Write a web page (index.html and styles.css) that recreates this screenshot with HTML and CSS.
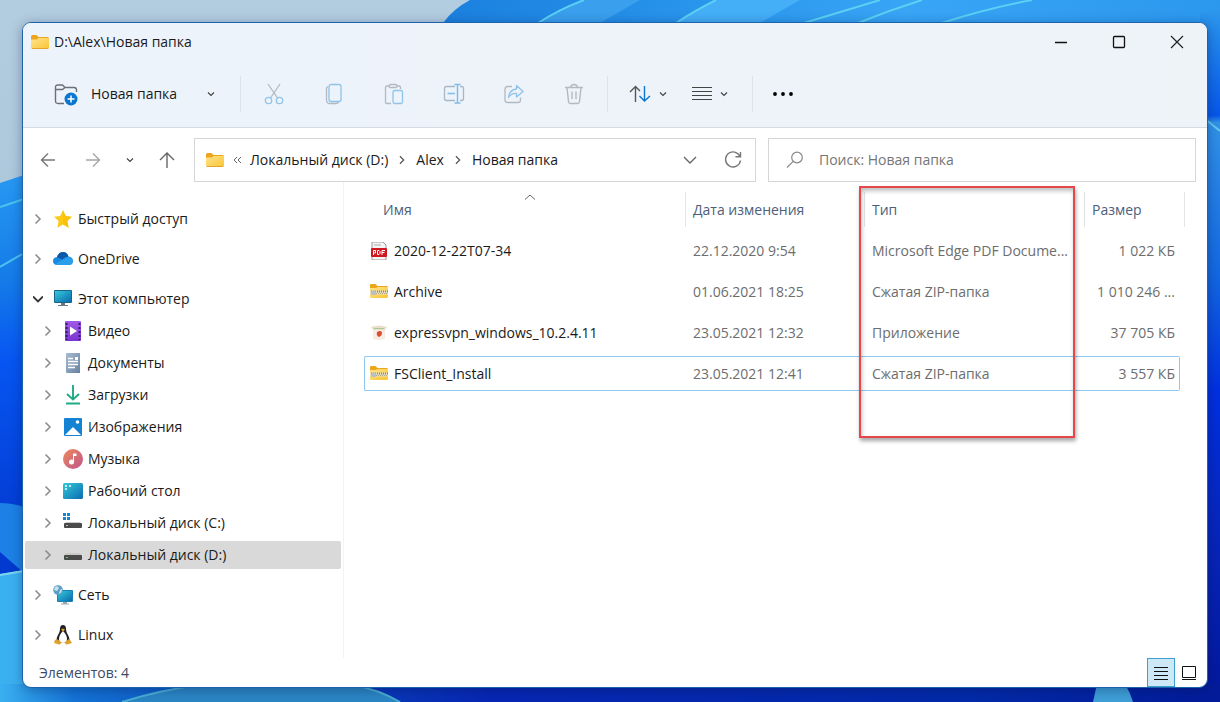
FILE: index.html
```html
<!DOCTYPE html>
<html lang="ru">
<head>
<meta charset="utf-8">
<title>D:\Alex\Новая папка</title>
<link rel="stylesheet" href="styles.css">
</head>
<body>
<svg width="0" height="0" class="defs" aria-hidden="true">
  <defs>
    <linearGradient id="gFolder" x1="0" y1="0" x2="1" y2="1"><stop offset="0" stop-color="#ffe38f"/><stop offset="1" stop-color="#f9c531"/></linearGradient>
    <linearGradient id="gTeal" x1="0" y1="0" x2="1" y2="1"><stop offset="0" stop-color="#35c9d9"/><stop offset="1" stop-color="#0a6bb0"/></linearGradient>
    <linearGradient id="gVideo" x1="0" y1="0" x2="0" y2="1"><stop offset="0" stop-color="#a05ae8"/><stop offset="1" stop-color="#7a35cf"/></linearGradient>
    <linearGradient id="gDoc" x1="0" y1="0" x2="1" y2="1"><stop offset="0" stop-color="#a9bdd2"/><stop offset="1" stop-color="#67819f"/></linearGradient>
    <linearGradient id="gMusic" x1="0" y1="0" x2="1" y2="1"><stop offset="0" stop-color="#ee8a5a"/><stop offset="1" stop-color="#bf548c"/></linearGradient>
    <symbol id="folder" viewBox="0 0 18 14"><path d="M0 2Q0 0 1.500 0H5.500L7.500 2H16.500Q18 2 18 3.500V12H0Z" fill="#eda51c"/><path d="M0 4.500H6L7.500 3H17Q18 3 18 4V12.500Q18 14 16.500 14H1.500Q0 14 0 12.500Z" fill="url(#gFolder)"/><path d="M1 13.500H17" stroke="#e0a52c"/></symbol>
    <symbol id="zip" viewBox="0 0 18 14"><path d="M0 1Q0 0 1 0H5.500L7.500 2H17L18 3V12H0Z" fill="#eda51c"/><path d="M0 4H6L7.500 3H18V13L17 14H1L0 13Z" fill="url(#gFolder)"/><rect y="6.500" width="18" height="4" fill="#e9dfb8"/><path d="M1 7.500H18" stroke="#8d8870" stroke-width="2" stroke-dasharray="1 1"/><path d="M2 9.500H18" stroke="#aaa58c" stroke-width="1" stroke-dasharray="1 1"/><rect x="1" y="7" width="5" height="4" rx="1" fill="#b7c0c7"/></symbol>
    <symbol id="down" viewBox="0 0 8 8"><path d="M1 2.500L4 5.500L7 2.500" fill="none" stroke="currentColor" stroke-width="1.200"/></symbol>
    <symbol id="right" viewBox="0 0 8 12"><path d="M1.500 1.500L6 6L1.500 10.500" fill="none" stroke="currentColor" stroke-width="1.500"/></symbol>
    <symbol id="drive" viewBox="0 0 20 18"><path d="M3 7H17L19 10H1Z" fill="#c9c9c9"/><rect x="1" y="9" width="18" height="5" rx="1" fill="#4a4a4a"/><rect x="3" y="11" width="2" height="1" fill="#56d06c"/></symbol>
  </defs>
</svg>

<svg class="wallpaper" viewBox="0 0 1220 702" preserveAspectRatio="none" aria-hidden="true">
  <defs>
    <linearGradient id="sky" x1="0" y1="0" x2="0" y2="1"><stop offset="0" stop-color="#b3cde0"/><stop offset="1" stop-color="#9db9cf"/></linearGradient>
    <linearGradient id="top" x1="0" y1="0" x2="1" y2="0"><stop offset="0" stop-color="#1b80de"/><stop offset=".3" stop-color="#2793ea"/><stop offset=".6" stop-color="#38a5f5"/><stop offset="1" stop-color="#2b98ee"/></linearGradient>
    <linearGradient id="left" x1="0" y1="0" x2="0" y2="1"><stop offset="0" stop-color="#2798f2"/><stop offset=".2" stop-color="#147be8"/><stop offset=".35" stop-color="#0756f2"/><stop offset=".7" stop-color="#0238cf"/><stop offset="1" stop-color="#0541ca"/></linearGradient>
    <linearGradient id="side" x1="0" y1="0" x2="0" y2="1"><stop offset="0" stop-color="#2b96ec"/><stop offset=".15" stop-color="#0757ea"/><stop offset=".16" stop-color="#3292e6"/><stop offset=".38" stop-color="#1468e1"/><stop offset=".55" stop-color="#0030e0"/><stop offset=".75" stop-color="#0726bb"/><stop offset="1" stop-color="#03189b"/></linearGradient>
    <linearGradient id="bottom" x1="0" y1="0" x2="1" y2="0"><stop offset="0" stop-color="#3bb0f0"/><stop offset=".06" stop-color="#1474d6"/><stop offset=".18" stop-color="#0c50bd"/><stop offset=".4" stop-color="#0727b4"/><stop offset=".8" stop-color="#032aa9"/><stop offset="1" stop-color="#031b99"/></linearGradient>
  </defs>
  <rect width="1220" height="702" fill="url(#sky)"/>
  <path d="M443 23Q453 9 470 0H1220V60H443Z" fill="url(#top)"/>
  <path d="M538 23L584 0H640L600 23Z" fill="#3a9fec"/>
  <path d="M676 23L716 0H800L760 23Z" fill="#44aef6"/>
  <path d="M538 23Q560 9 584 0M676 23Q694 11 716 0M804 23Q850 9 880 0M858 23Q890 10 922 0M942 23Q985 9 1032 0" fill="none" stroke="#5bd0f2" stroke-width="2"/>
  <path d="M0 183L24 175V702H0Z" fill="url(#left)"/>
  <path d="M0 207L24 199M0 267L24 253" stroke="#4cc3ee" stroke-width="2"/>
  <path d="M0 503Q12 503 24 507V573L0 552Z" fill="#1c80e6"/>
  <path d="M0 574L24 570V702H0Z" fill="#3bb0f0"/>
  <path d="M0 575L24 571" stroke="#7fd5ef" stroke-width="2"/>
  <rect x="1200" y="12" width="20" height="690" fill="url(#side)"/>
  <path d="M1200 115L1220 131" stroke="#63c9ee" stroke-width="2"/>
  <rect y="684" width="1220" height="18" fill="url(#bottom)"/>
  <path d="M122 702Q160 690 205 684H350Q380 690 400 702Z" fill="#2b86c4"/>
  <path d="M122 702Q160 690 205 684M350 684Q380 690 400 702" stroke="#4aafd4" stroke-width="2" fill="none"/>
  <path d="M1093 702L1097 684H1125Q1130 692 1133 702Z" fill="#3e9fd6"/>
</svg>

<main class="window">
  <header class="chrome">
    <div class="titlebar">
      <svg class="folder-icon"><use href="#folder"/></svg>
      <h1 class="title">D:\Alex\Новая папка</h1>
      <div class="window-buttons">
        <button type="button" aria-label="Свернуть"><svg width="14" height="14"><path d="M1 7.500H13" stroke="#111" stroke-width="1.300"/></svg></button>
        <button type="button" aria-label="Развернуть"><svg width="14" height="14"><rect x="1.500" y="1.500" width="11" height="11" rx="1" fill="none" stroke="#111" stroke-width="1.300"/></svg></button>
        <button type="button" aria-label="Закрыть"><svg width="14" height="14"><path d="M1 1L13 13M13 1L1 13" stroke="#222" stroke-width="1.200"/></svg></button>
      </div>
    </div>
    <div class="commands">
      <button type="button" class="new-folder">
        <svg width="24" height="24" fill="none"><path d="M10 21.500H4Q1.500 21.500 1.500 19V5.500Q1.500 3 4 3H8.500L11 5.500H20Q22.500 5.500 22.500 8V10M1.500 7.500H8.500L11 5.500" stroke="#6c7076" stroke-width="1.400"/><circle cx="17" cy="17" r="6.500" fill="#0b76d0"/><path d="M17 13.500V20.500M13.500 17H20.500" stroke="#fff" stroke-width="1.500"/></svg>
        <span>Новая папка</span>
        <svg class="down"><use href="#down"/></svg>
      </button>
      <span class="divider"></span>
      <div class="tools">
        <button type="button" aria-label="Вырезать"><svg width="22" height="22" fill="none" stroke-width="1.300"><path d="M5 1L14.500 15M17 1L7.500 15" stroke="#b3b9c1"/><circle cx="5.500" cy="17.500" r="3.200" stroke="#8fc3ea"/><circle cx="16.500" cy="17.500" r="3.200" stroke="#8fc3ea"/></svg></button>
        <button type="button" aria-label="Копировать"><svg width="22" height="22" fill="none" stroke-width="1.300"><path d="M5 3.500Q3.500 4 3.500 6V17Q3.500 20.500 7 20.500H13Q15 20.500 15.500 19" stroke="#b3b9c1"/><rect x="6" y="1.500" width="12" height="17" rx="2" stroke="#8fc3ea"/></svg></button>
        <button type="button" aria-label="Вставить"><svg width="22" height="22" fill="none" stroke-width="1.300"><path d="M8 20.500H4Q2.500 20.500 2.500 19V4.500Q2.500 3 4 3H6M14 3H16Q17.500 3 17.500 4.500V6" stroke="#b3b9c1"/><rect x="6" y="1.500" width="8" height="3" rx="1.500" stroke="#b3b9c1"/><rect x="10" y="7.500" width="9.500" height="13" rx="1.500" stroke="#8fc3ea"/></svg></button>
        <button type="button" aria-label="Переименовать"><svg width="22" height="22" fill="none" stroke-width="1.300"><path d="M12 3.500H3.500Q1.500 3.500 1.500 5.500V15.500Q1.500 17.500 3.500 17.500H12M17 3.500H18.500Q20.500 3.500 20.500 5.500V15.500Q20.500 17.500 18.500 17.500H17" stroke="#a8b7c8"/><path d="M4.500 10.500H12M14.500 1.500V20M11.500 1.500H17.500M11.500 20H17.500" stroke="#7fbce8" stroke-width="1.500"/></svg></button>
        <button type="button" aria-label="Поделиться"><svg width="22" height="22" fill="none" stroke-width="1.300" stroke-linejoin="round"><path d="M9 3.500H4.500Q2 3.500 2 6V17Q2 19.500 4.500 19.500H15Q17.500 19.500 17.500 17V14.500" stroke="#b3b9c1"/><path d="M13.500 2.500L20 8.500L13.500 14V10.500Q8.500 10 5.500 14.500Q6 7 13.500 6Z" stroke="#8fc3ea"/></svg></button>
        <button type="button" aria-label="Удалить"><svg width="22" height="22" fill="none" stroke="#b3b9c1" stroke-width="1.400"><path d="M2 4.500H20M7.500 4.500Q8 1.500 11 1.500Q14 1.500 14.500 4.500M4 4.500L5.500 18.500Q5.700 20.500 7.500 20.500H14.500Q16.300 20.500 16.500 18.500L18 4.500M9 8.500V16M13 8.500V16"/></svg></button>
      </div>
      <span class="divider"></span>
      <div class="menus">
        <button type="button" aria-label="Сортировать"><svg width="22" height="18" fill="none" stroke-width="1.400"><path d="M6.500 17V2M1 7L6.500 1.500L11 6" stroke="#555"/><path d="M15.500 1V16M10.500 11L15.500 16L21 11" stroke="#0b76d0"/></svg><svg class="down"><use href="#down"/></svg></button>
        <button type="button" aria-label="Просмотреть"><svg width="20" height="16"><path d="M0 1.500H20M0 5.500H20M0 9.500H20M0 13.500H20" stroke="#444" stroke-width="1.200"/></svg><svg class="down"><use href="#down"/></svg></button>
      </div>
      <span class="divider"></span>
      <button type="button" class="more" aria-label="Дополнительно"><svg width="20" height="4"><circle cx="2" cy="2" r="1.900"/><circle cx="10" cy="2" r="1.900"/><circle cx="18" cy="2" r="1.900"/></svg></button>
    </div>
  </header>

  <div class="navigation">
    <nav class="history" aria-label="Переходы">
      <button type="button" aria-label="Назад"><svg width="16" height="16" fill="none" stroke="#777" stroke-width="1.400"><path d="M15 8H1.500M8 1.500L1.500 8L8 14.500"/></svg></button>
      <button type="button" aria-label="Вперёд"><svg width="16" height="16" fill="none" stroke="#a5a5a5" stroke-width="1.400"><path d="M1 8H14.500M8 1.500L14.500 8L8 14.500"/></svg></button>
      <button type="button" aria-label="Последние" class="recent"><svg class="down"><use href="#down"/></svg></button>
      <button type="button" aria-label="Вверх"><svg width="16" height="16" fill="none" stroke="#666" stroke-width="1.400"><path d="M8 16V1M1 8L8 1L15 8"/></svg></button>
    </nav>
    <div class="address">
      <svg class="folder-icon"><use href="#folder"/></svg>
      <svg class="chevrons" width="8" height="8"><path d="M4 1L1 4L4 7M8 1L5 4L8 7" fill="none" stroke="#666"/></svg>
      <a href="#">Локальный диск (D:)</a>
      <svg class="crumb"><use href="#right"/></svg>
      <a href="#">Alex</a>
      <svg class="crumb"><use href="#right"/></svg>
      <a href="#">Новая папка</a>
      <button type="button" class="expand" aria-label="Показать список"><svg width="14" height="10"><path d="M1 2L7 8L13 2" fill="none" stroke="#666" stroke-width="1.400"/></svg></button>
      <button type="button" aria-label="Обновить"><svg width="18" height="18" fill="none" stroke="#777" stroke-width="1.400"><path d="M16 5.500A7.500 7.500 0 1 0 16.500 9.500M16.500 1V5.800H11.500"/></svg></button>
    </div>
    <label class="search">
      <svg width="18" height="18" fill="none" stroke="#888" stroke-width="1.200"><circle cx="11" cy="6.500" r="5.300"/><path d="M7.200 10.300L1 16.500"/></svg>
      <input type="search" aria-label="Поиск" placeholder="Поиск: Новая папка">
    </label>
  </div>

  <div class="content">
    <aside class="tree">
      <ul>
        <li><button type="button"><svg class="toggle"><use href="#right"/></svg><svg class="ico" viewBox="0 0 20 20"><path d="M10 1L12.800 7L19 7.700L14.400 12L15.700 18.700L10 15.400L4.300 18.700L5.600 12L1 7.700L7.200 7Z" fill="#fcc916"/><path d="M10 1L12.800 7L19 7.700L14.400 12L15.700 18.700L10 15.400Z" fill="#f8b900" opacity=".4"/></svg>Быстрый доступ</button></li>
      </ul>
      <ul>
        <li><button type="button"><svg class="toggle"><use href="#right"/></svg><svg class="ico" viewBox="0 0 20 20"><path d="M4.500 16Q0 16 0 12Q0 8.500 4 8Q6 3 10 3Q14 3 15.500 7.500Q20 8 20 12Q20 16 16 16Z" fill="#168be0"/><path d="M4 8Q6 3 10 3Q14 3 15.500 7.500Q12 7.500 9 10.500L4 8Z" fill="#0958aa"/><path d="M2 15L13 9Q17 6.500 19.500 10Q20.500 16 16 16H4.500Q3 16 2 15Z" fill="#32a6ed" opacity=".7"/></svg>OneDrive</button></li>
      </ul>
      <ul>
        <li><button type="button"><svg class="toggle" viewBox="0 0 10 12"><path d="M0 3.500L5 8.500L10 3.500" fill="none" stroke="#333" stroke-width="1.800"/></svg><svg class="ico" viewBox="0 0 20 20"><rect x="1" y="1" width="18" height="13" rx="1" fill="#176488"/><rect x="2" y="2" width="16" height="11" fill="url(#gTeal)"/><path d="M8 14H12V16H15V17H5V16H8Z" fill="#6b7780"/></svg>Этот компьютер</button>
          <ul class="branch">
            <li><button type="button"><svg class="toggle"><use href="#right"/></svg><svg class="ico" viewBox="0 0 20 20"><rect x="2" width="16" height="20" rx="1" fill="url(#gVideo)"/><path d="M3.500 2V19M16.500 2V19" stroke="#39166d" stroke-width="2" stroke-dasharray="2 2"/><path d="M7 5.500L14 10L7 14.500Z" fill="#fff"/></svg>Видео</button></li>
            <li><button type="button"><svg class="toggle"><use href="#right"/></svg><svg class="ico" viewBox="0 0 20 20"><path d="M3 0H17V20H4Q3 20 3 19Z" fill="url(#gDoc)"/><path d="M5 5.500H10M5 8.500H15M5 11.500H15M5 14.500H12" stroke="#fff" stroke-width="1.300"/><rect x="12" y="4" width="3" height="3" fill="#fff"/></svg>Документы</button></li>
            <li><button type="button"><svg class="toggle"><use href="#right"/></svg><svg class="ico" viewBox="0 0 20 20"><path d="M10 0V14.500M4 9L10 14.500L16 9M3 18.500H17" fill="none" stroke="#1fab84" stroke-width="1.900"/></svg>Загрузки</button></li>
            <li><button type="button"><svg class="toggle"><use href="#right"/></svg><svg class="ico" viewBox="0 0 20 20"><rect x="1" y="1" width="18" height="18" rx="1" fill="#1583d4"/><path d="M2 18L10 10L18 18Z" fill="#fff"/><circle cx="14.500" cy="5" r="1.800" fill="#fff"/></svg>Изображения</button></li>
            <li><button type="button"><svg class="toggle"><use href="#right"/></svg><svg class="ico" viewBox="0 0 20 20"><circle cx="10" cy="10" r="10" fill="url(#gMusic)"/><circle cx="8.500" cy="13" r="2.500" fill="#fff"/><path d="M10 13V4.500H13.500V7H11V13Z" fill="#fff"/></svg>Музыка</button></li>
            <li><button type="button"><svg class="toggle"><use href="#right"/></svg><svg class="ico" viewBox="0 0 20 20"><rect y="2" width="20" height="16" rx="1.500" fill="url(#gTeal)"/><path d="M2 5H4M2 8H4M6 5H8" stroke="#fff" stroke-width="1.500"/></svg>Рабочий стол</button></li>
            <li><button type="button"><svg class="toggle"><use href="#right"/></svg><svg class="ico" viewBox="0 0 20 20"><path d="M3 9H17L19 12H1Z" fill="#c9c9c9"/><rect x="1" y="10" width="18" height="5" rx="1" fill="#4a4a4a"/><path d="M0 0H3V3H0ZM4 0H7V3H4ZM0 4H3V7H0ZM4 4H7V7H4Z" fill="#1683cf"/><rect x="3" y="12" width="2" height="1" fill="#9ad0a4"/></svg>Локальный диск (C:)</button></li>
            <li><button type="button" class="current"><svg class="toggle"><use href="#right"/></svg><svg class="ico"><use href="#drive"/></svg>Локальный диск (D:)</button></li>
          </ul>
        </li>
      </ul>
      <ul>
        <li><button type="button"><svg class="toggle"><use href="#right"/></svg><svg class="ico" viewBox="0 0 20 20"><rect x="4" y="5" width="16" height="12" rx="1" fill="#1482b4"/><rect x="5" y="6" width="14" height="10" fill="url(#gTeal)"/><path d="M10 17H14V18.500H16V19.500H8V18.500H10Z" fill="#9ca8b0"/><circle cx="5" cy="5" r="4.800" fill="#5b9ec7"/><path d="M2 2Q5 0 6 3L4 6L1 5ZM7 5L9 4Q9 8 6 9Z" fill="#c7e2ee"/></svg>Сеть</button></li>
      </ul>
      <ul>
        <li><button type="button"><svg class="toggle"><use href="#right"/></svg><svg class="ico" viewBox="0 0 20 20"><path d="M10 0Q13 0 13 4Q13 7 15 10Q18 15 15 18H5Q2 15 5 10Q7 7 7 4Q7 0 10 0Z" fill="#222"/><path d="M10 6Q14 10 14 14Q14 18 10 18Q6 18 6 14Q6 10 10 6Z" fill="#fff"/><path d="M8 4.500L10 3.500L12 4.500L10 6.500Z" fill="#e9a820"/><path d="M4 14L8 17Q8 20 6 19.500L1 18L2 15ZM16 14L12 17Q12 20 14 19.500L19 18L17 15Z" fill="#dfa126"/></svg>Linux</button></li>
      </ul>
    </aside>

    <section class="files">
      <table>
        <colgroup><col><col class="c-date"><col class="c-type"><col class="c-size"><col class="c-end"></colgroup>
        <thead>
          <tr><th class="h-name">Имя<svg class="sort" width="12" height="6"><path d="M1 5.500L6 1L11 5.500" fill="none" stroke="#666"/></svg></th><th>Дата изменения</th><th>Тип</th><th colspan="2">Размер</th></tr>
        </thead>
        <tbody>
          <tr><td><span class="name"><svg viewBox="0 0 18 18"><path d="M2 0H13L16 3V18H2Z" fill="#f4f4f4" stroke="#999"/><path d="M4 3H11" stroke="#aaa"/><rect x="1" y="6" width="16" height="9" rx="1" fill="#cf1720"/><path d="M3.500 13V8.500H5.500V11H3.500M7.500 8.500V12.500H9L10 11.500V9.500L9 8.500ZM12 13V8.500H15M12 10.500H14.500" fill="none" stroke="#fff"/></svg>2020-12-22T07-34</span></td><td>22.12.2020 9:54</td><td>Microsoft Edge PDF Docume...</td><td>1 022 КБ</td></tr>
          <tr><td><span class="name"><svg viewBox="0 0 18 18"><use href="#zip" y="1" width="18" height="14"/></svg>Archive</span></td><td>01.06.2021 18:25</td><td>Сжатая ZIP-папка</td><td>1 010 246 ...</td></tr>
          <tr><td><span class="name"><svg viewBox="0 0 18 18"><path d="M3 5H15V15Q9 17 3 15Z" fill="#f8ece2"/><path d="M1 3Q9 0 17 3L15 6H3Z" fill="#e9dfcb"/><path d="M4 4.500H14" stroke="#a9c798"/><path d="M7 8Q11 6 12 8.500Q12 12 9 13Q6 12 7 8Z" fill="#dc4c36"/></svg>expressvpn_windows_10.2.4.11</span></td><td>23.05.2021 12:32</td><td>Приложение</td><td>37 705 КБ</td></tr>
          <tr class="focused"><td><span class="name"><svg viewBox="0 0 18 18"><use href="#zip" y="1" width="18" height="14"/></svg>FSClient_Install</span></td><td>23.05.2021 12:41</td><td>Сжатая ZIP-папка</td><td>3 557 КБ</td></tr>
        </tbody>
      </table>
      <div class="callout"></div>
    </section>
  </div>

  <footer class="status">
    <span>Элементов: 4</span>
    <div class="views">
      <button type="button" class="active" aria-label="Таблица"><svg width="16" height="16"><path d="M1 2.500H15M1 6.500H15M1 10.500H15M1 14.500H15" stroke="#111"/></svg></button>
      <button type="button" aria-label="Крупные значки"><svg width="16" height="16"><path d="M1.500 1.500H14.500V12.500H1.500ZM1 14.500H15" fill="none" stroke="#111"/></svg></button>
    </div>
  </footer>
</main>
</body>
</html>
```

FILE: styles.css
```css
* { box-sizing: border-box; }

body {
  margin: 0;
  min-height: 100vh;
  padding: 22px 12px 14px 22px;
  display: flex;
  background: #0a3fc4;
  color: #1a1a1a;
  font: 14px/20px "Open Sans", "Noto Sans", sans-serif;
}

button {
  display: flex;
  align-items: center;
  justify-content: center;
  padding: 0;
  border: 0;
  background: none;
  color: inherit;
  font: inherit;
}

a { color: inherit; text-decoration: none; }
ul { margin: 0; padding: 0; list-style: none; }
svg { flex: none; display: block; }

.defs { position: absolute; }

.wallpaper {
  position: absolute;
  inset: 0;
  width: 100%;
  height: 100%;
  z-index: -1;
}

.window {
  flex: 1;
  min-width: 0;
  display: flex;
  flex-direction: column;
  border: 1px solid #1c63ab;
  border-radius: 9px;
  background: #fff;
  overflow: hidden;
  box-shadow: 0 2px 12px rgba(0, 20, 70, .35);
}

/* Title and command bars */
.chrome {
  background: linear-gradient(90deg, #edf3fb, #eef3f8);
  border-bottom: 1px solid #d5dbe2;
}

.titlebar {
  display: flex;
  align-items: center;
  gap: 5px;
  height: 37px;
  padding: 0 1px 0 8px;
}

.folder-icon { width: 18px; height: 14px; }
.title { margin: 0; font-size: 14px; font-weight: 400; }
.window-buttons { display: flex; margin-left: auto; }
.window-buttons button { width: 58px; height: 36px; }

.commands { display: flex; align-items: center; height: 67px; }

.new-folder { gap: 13px; padding: 0 25px 0 31px; }
.new-folder .down { margin-left: 17px; }
.down { width: 8px; height: 8px; color: #444; }
.divider { width: 1px; height: 36px; background: #dde3ea; }
.tools { display: flex; padding: 0 3px; }
.tools button { width: 60px; height: 36px; }
.menus { display: flex; gap: 25px; padding: 0 24px 0 21px; }
.menus button { gap: 8px; height: 36px; }
.more { padding-left: 20px; }

/* Address and search */
.navigation {
  display: grid;
  grid-template-columns: 142px 562fr 428fr;
  gap: 12px;
  padding: 10px 11px 0 17px;
}

.history { display: flex; align-items: center; gap: 29px; }
.history .recent { margin: 0 -4px; }

.address,
.search {
  display: flex;
  align-items: center;
  height: 44px;
  border: 1px solid #d6d6d6;
  min-width: 0;
}

.address { gap: 9px; padding: 0 13px 0 11px; white-space: nowrap; }
.crumb { width: 10px; height: 10px; color: #555; }
.expand { margin-left: auto; margin-right: 18px; }

.search { gap: 15px; padding: 0 17px; }
.search input {
  flex: 1;
  min-width: 0;
  padding: 0;
  border: 0;
  outline: 0;
  background: none;
  font: inherit;
}
.search input::placeholder { color: #757575; opacity: 1; }

/* Folder tree */
.content { flex: 1; display: flex; min-height: 0; }

.tree {
  flex: none;
  width: 321px;
  padding: 23px 2px 8px;
  display: flex;
  flex-direction: column;
  gap: 12px;
  border-right: 1px solid #f3f3f3;
}

.tree button {
  width: 100%;
  height: 28px;
  justify-content: flex-start;
  padding-left: 8px;
  border-radius: 2px;
  white-space: nowrap;
}
.branch { display: flex; flex-direction: column; gap: 4px; margin-top: 4px; }
.branch button { padding-left: 18px; }
.tree .current { background: #d9d9d9; }
.toggle { width: 10px; height: 12px; margin-right: 10px; color: #8a8a8a; }
.ico { width: 20px; height: 20px; margin-right: 5px; }

/* File list */
.files {
  flex: 1;
  min-width: 0;
  position: relative;
  padding: 4px 22px 0 20px;
}

table {
  width: 100%;
  table-layout: fixed;
  border-collapse: separate;
  border-spacing: 0 6px;
}

.c-date { width: 179px; }
.c-type { width: 220px; }
.c-size { width: 95px; }
.c-end { width: 5px; }

th {
  height: 35px;
  padding: 0 7px;
  border-right: 1px solid #e2e5e8;
  color: #4c607a;
  font-weight: 400;
  text-align: left;
}
.h-name { position: relative; padding-left: 19px; }
.sort { position: absolute; left: 50%; top: 2px; }

td {
  height: 35px;
  padding: 0 0 0 7px;
  border: 0 solid #8fc8f0;
  color: #6d6d6d;
  white-space: nowrap;
}
td:first-child { padding-left: 6px; color: #1a1a1a; }
td:nth-child(4) { padding-right: 5px; text-align: right; }
.name { display: flex; align-items: center; gap: 6px; }
.name svg { width: 18px; height: 18px; }

.focused td { border-width: 1px 0; border-color: #8fc8f0; }
.focused td:first-child { border-left-width: 1px; padding-left: 5px; border-radius: 2px 0 0 2px; }
.focused td:nth-child(4) { border-right-width: 1px; padding-right: 4px; border-radius: 0 2px 2px 0; }

.callout {
  position: absolute;
  top: 4px;
  right: 132px;
  width: 216px;
  height: 252px;
  border: 2px solid #e5484a;
  box-shadow: 1px 3px 4px rgba(0, 0, 0, .35), inset 1px 3px 4px rgba(0, 0, 0, .25);
}

/* Status bar */
.status {
  display: flex;
  align-items: center;
  justify-content: space-between;
  height: 29px;
  padding: 0 4px 0 16px;
  color: #3b4a66;
}
.views { display: flex; }
.views button { width: 28px; height: 29px; }
.views .active { border: 1px solid #3c9fd0; background: #cde8f6; }
```
